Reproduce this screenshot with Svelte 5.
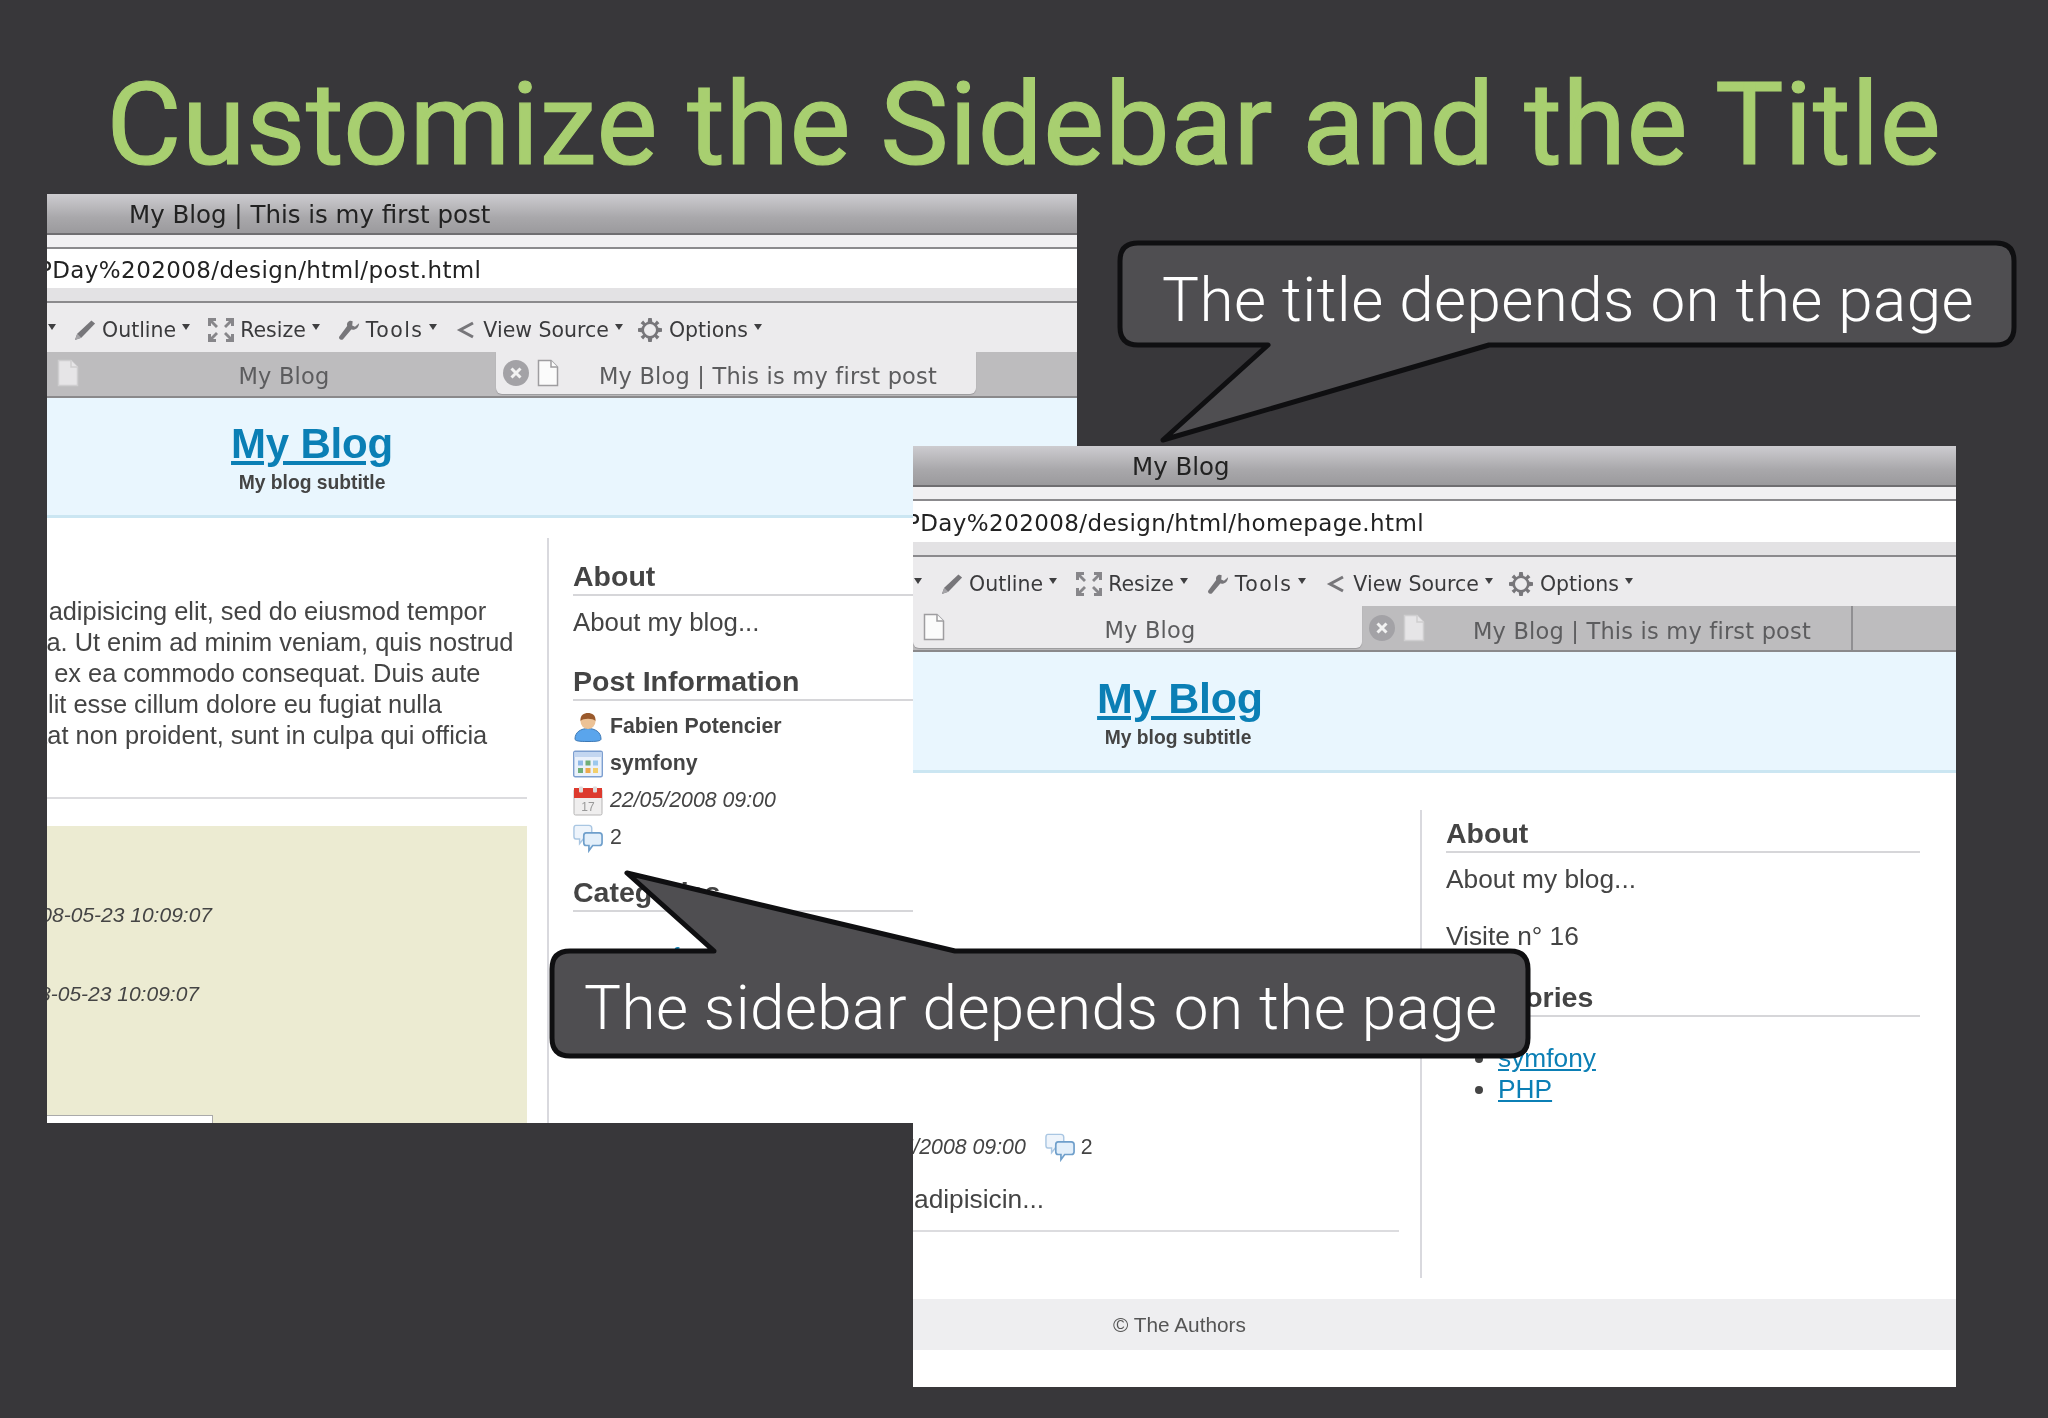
<script lang="ts">
  // Slide with two overlapping browser screenshots and two speech bubbles.
  const tools = [
    { label: "Outline", icon: "pencil" },
    { label: "Resize", icon: "resize" },
    { label: "Tools", icon: "wrench" },
    { label: "View Source", icon: "source" },
    { label: "Options", icon: "gear" },
  ];
  const lorem = [
    "Lorem ipsum dolor sit amet, consectetur adipisicing elit, sed do eiusmod tempor",
    "incididunt ut labore et dolore magna aliqua. Ut enim ad minim veniam, quis nostrud",
    "exercitation ullamco laboris nisi ut aliquip ex ea commodo consequat. Duis aute",
    "irure dolor in reprehenderit in voluptate velit esse cillum dolore eu fugiat nulla",
    "pariatur. Excepteur sint occaecat cupidatat non proident, sunt in culpa qui officia",
  ];
  const firstPost = "My Blog | This is my first post";
</script>

{#snippet doc(cls)}
  <svg class="doc {cls}" viewBox="0 0 22 28">
    <path d="M1.5 1.5H14L20.5 8V26.5H1.5Z" />
    <path d="M14 1.5V8H20.5" />
  </svg>
{/snippet}

{#snippet toolIcon(name)}
  {#if name === "pencil"}
    <svg class="ti" viewBox="0 0 24 24"><path d="M19 1.5L23 5 8 20.5 1 23 3.5 16Z" fill="#77767a" /><path d="M3.5 16L8 20.5 1 23Z" fill="#a5a4a8" /></svg>
  {:else if name === "resize"}
    <svg class="ti wide" viewBox="0 0 26 24">
      <g fill="#87868a">
        <path d="M0 0H8V3H5L10 8 8 10 3 5V8H0Z" />
        <path d="M26 0H18V3H21L16 8 18 10 23 5V8H26Z" />
        <path d="M0 24H8V21H5L10 16 8 14 3 19V16H0Z" />
        <path d="M26 24H18V21H21L16 16 18 14 23 19V16H26Z" />
      </g>
    </svg>
  {:else if name === "wrench"}
    <svg class="ti" viewBox="0 0 24 24"><path d="M23 4.5L18.5 8.5 15.5 7 16 2.5C12.5 0.5 9 3.5 10 7.5L1.5 19C0 21 3.5 24 5.5 22L14.5 11.5C19 12.5 23 9 23 4.5Z" fill="#77767a" /></svg>
  {:else if name === "source"}
    <svg class="ti" viewBox="0 0 20 24"><path d="M17 5L4 12 17 19" fill="none" stroke="#77767a" stroke-width="3" /></svg>
  {:else}
    <svg class="ti wide" viewBox="0 0 28 28">
      <circle cx="14" cy="14" r="8.5" fill="none" stroke="#77767a" stroke-width="3" />
      <path d="M12 0H16L17 6H11ZM12 28H16L17 22H11ZM0 12V16L6 17V11ZM28 12V16L22 17V11ZM3 6L6 3 10 8 8 10ZM25 6L22 3 18 8 20 10ZM3 22L6 25 10 20 8 18ZM25 22L22 25 18 20 20 18Z" fill="#77767a" />
    </svg>
  {/if}
{/snippet}

{#snippet chrome(title, urlText, firstActive)}
  <div class="titlebar"><span class="wintitle">{title}</span></div>
  <div class="band"></div>
  <div class="url"><span>{urlText}</span></div>
  <div class="band low"></div>
  <div class="toolbar">
    <i class="tri first"></i>
    {#each tools as t}
      <div class="tool {t.icon}">
        {@render toolIcon(t.icon)}
        <span>{t.label}</span>
        <i class="tri"></i>
      </div>
    {/each}
  </div>
  <div class="tabs">
    <div class="tab one" class:active={firstActive}>
      {@render doc(firstActive ? "on" : "")}
      <span class="tablabel">My Blog</span>
    </div>
    <div class="tab two" class:active={!firstActive}>
      <svg class="close" viewBox="0 0 26 26">
        <circle cx="13" cy="13" r="13" fill="#a3a2a6" />
        <path d="M8.5 8.5L17.5 17.5M17.5 8.5L8.5 17.5" stroke="#f2f2f2" stroke-width="3" />
      </svg>
      {@render doc(firstActive ? "" : "on")}
      <span class="tablabel">{firstPost}</span>
    </div>
  </div>
  <header class="masthead">
    <div class="blogname"><a href="#top">My Blog</a></div>
    <div class="subtitle">My blog subtitle</div>
  </header>
{/snippet}

{#snippet bubbles()}
  <svg class="ico" viewBox="0 0 32 30">
    <path d="M3 1.5H17Q20 1.5 20 4.5V13Q20 16 17 16H11L7 21V16H3Q1 16 1 13V4.5Q1 1.5 3 1.5Z" fill="#eef4fb" stroke="#a9c6e2" stroke-width="1.5" />
    <path d="M14 9.5H28Q31 9.5 31 12.5V20Q31 23 28 23H21L17 28.5V23H14Q11.5 23 11.5 20V12.5Q11.5 9.5 14 9.5Z" fill="#e3effa" stroke="#6f9fcb" stroke-width="1.8" />
  </svg>
{/snippet}

<div class="slide">
  <h1>Customize the Sidebar and the Title</h1>

  <section class="window w1">
    {@render chrome(firstPost, "PHPDay%202008/design/html/post.html", false)}
    <div class="page">
      <div class="main">
        <div class="lorem">
          {#each lorem as line}<div>{line}</div>{/each}
        </div>
        <hr />
        <div class="comments">
          <div class="when a">2008-05-23 10:09:07</div>
          <div class="when b">2008-05-23 10:09:07</div>
          <div class="field"></div>
        </div>
      </div>
      <aside class="side">
        <h3>About</h3>
        <p class="about">About my blog...</p>
        <h3 class="info">Post Information</h3>
        <ul class="meta">
          <li>
            <svg class="ico" viewBox="0 0 30 30">
              <path d="M2 27C2 20 8 16.5 15 16.5S28 20 28 27C28 29 24 29.5 15 29.5S2 29 2 27Z" fill="#5aa5ec" stroke="#3d78b4" />
              <circle cx="15" cy="9.5" r="7.5" fill="#ecc296" />
              <path d="M7.5 9C7 3 11 1 15 1S23 3 22.5 9C20 6 10 6 7.5 9Z" fill="#9a5a2c" />
            </svg>
            <b>Fabien Potencier</b>
          </li>
          <li>
            <svg class="ico" viewBox="0 0 30 27">
              <rect x="0.7" y="0.7" width="28.6" height="25.6" rx="1.5" fill="#eaf1fb" stroke="#7d9fd0" stroke-width="1.4" />
              <rect x="1.5" y="1.5" width="27" height="5" fill="#c3d6f0" />
              <g>
                <rect x="5" y="10" width="5" height="5" fill="#8fb9e8" /><rect x="12.5" y="10" width="5" height="5" fill="#6fae78" /><rect x="20" y="10" width="5" height="5" fill="#9cc8ec" />
                <rect x="5" y="17.5" width="5" height="5" fill="#6fae78" /><rect x="12.5" y="17.5" width="5" height="5" fill="#eeaa4c" /><rect x="20" y="17.5" width="5" height="5" fill="#f2cf6c" />
              </g>
            </svg>
            <b>symfony</b>
          </li>
          <li>
            <svg class="ico" viewBox="0 0 30 30">
              <rect x="1" y="3" width="28" height="26" rx="1.5" fill="#efeeee" stroke="#b5b4b4" />
              <rect x="1" y="2" width="28" height="10" fill="#dd3a2e" />
              <rect x="6" y="0.5" width="4" height="6" rx="1" fill="#ddd" /><rect x="20" y="0.5" width="4" height="6" rx="1" fill="#ddd" />
              <text x="15" y="25" text-anchor="middle" font-size="12" fill="#999" font-family="Liberation Sans">17</text>
            </svg>
            <em>22/05/2008 09:00</em>
          </li>
          <li>{@render bubbles()}<span>2</span></li>
        </ul>
        <h3 class="cat">Categories</h3>
        <ul class="cats"><li><a href="#top">symfony</a></li></ul>
      </aside>
    </div>
  </section>

  <section class="window w2">
    {@render chrome("My Blog", "PHPDay%202008/design/html/homepage.html", true)}
    <div class="page">
      <div class="main">
        <div class="postmeta">
          <em>22/05/2008 09:00</em>
          {@render bubbles()}
          <span>2</span>
        </div>
        <div class="excerpt">Lorem ipsum dolor sit amet, consectetur adipisicin...</div>
        <hr />
      </div>
      <aside class="side">
        <h3>About</h3>
        <p class="about">About my blog...</p>
        <p class="visits">Visite n° 16</p>
        <h3 class="cat">Categories</h3>
        <ul class="cats">
          <li><a href="#top">symfony</a></li>
          <li><a href="#top">PHP</a></li>
        </ul>
      </aside>
    </div>
    <footer class="foot"><span>© The Authors</span></footer>
  </section>

  <svg class="bubbles" viewBox="0 0 2048 1418">
    <path d="M1138 243H1996Q2014 243 2014 261V327Q2014 345 1996 345H1489L1163 440L1268 345H1138Q1120 345 1120 327V261Q1120 243 1138 243Z" />
    <path d="M570 951H714L627 873L955 951H1510Q1528 951 1528 969V1038Q1528 1056 1510 1056H570Q552 1056 552 1038V969Q552 951 570 951Z" />
  </svg>
  <div class="say top">The title depends on the page</div>
  <div class="say bottom">The sidebar depends on the page</div>
</div>

<style>
  :global(body) {
    margin: 0;
    background: #38373a;
  }
  .slide {
    position: relative;
    width: 2048px;
    height: 1418px;
    overflow: hidden;
    background: #38373a;
    font-family: "Liberation Sans", Arial, sans-serif;
  }
  h1 {
    margin: 0;
    padding-top: 58px;
    text-align: center;
    font: 400 115px/134px Roboto, sans-serif;
    letter-spacing: 0.65px;
    -webkit-text-stroke: 1.2px #a8cf70;
    color: #a8cf70;
  }
  .window {
    position: absolute;
    display: flex;
    flex-direction: column;
    background: #fff;
    overflow: hidden;
    color: #444;
    filter: blur(0.5px);
  }
  .w1 {
    left: 47px;
    top: 194px;
    width: 1030px;
    height: 929px;
  }
  .w2 {
    left: 913px;
    top: 446px;
    width: 1043px;
    height: 941px;
  }

  .titlebar {
    height: 41px;
    flex: none;
    display: flex;
    align-items: center;
    box-sizing: border-box;
    padding-top: 2px;
    border-bottom: 2px solid #6f6e71;
    background: linear-gradient(#cdccd0, #a9a8ab 60%, #9b9a9d);
    font: 24.5px "DejaVu Sans", sans-serif;
    color: #222;
  }
  .w1 .wintitle {
    margin-left: 82px;
  }
  .w2 .wintitle {
    margin-left: 219px;
  }
  .band {
    height: 14px;
    flex: none;
    box-sizing: border-box;
    background: #f1f0f2;
    border-bottom: 2px solid #8b8a8d;
  }
  .band.low {
    height: 15px;
    background: #e3e2e4;
  }
  .url {
    height: 39px;
    flex: none;
    display: flex;
    align-items: center;
    box-sizing: border-box;
    padding-top: 2px;
    background: #fff;
    font: 23px "DejaVu Sans", sans-serif;
    letter-spacing: 0.4px;
    color: #222;
    white-space: nowrap;
  }
  .w2 .url {
    height: 41px;
    padding-top: 3px;
  }
  .url span {
    margin-left: -41px;
  }
  .w2 .url span {
    margin-left: -39px;
  }
  .toolbar {
    height: 49px;
    flex: none;
    display: flex;
    align-items: center;
    gap: 18px;
    box-sizing: border-box;
    padding-top: 4px;
    background: #ecebed;
    font: 20.5px "DejaVu Sans", sans-serif;
    color: #3a3a3c;
  }
  .w2 .toolbar {
    gap: 19px;
  }
  .tool {
    display: flex;
    align-items: center;
    gap: 6px;
  }
  .tool span {
    white-space: nowrap;
  }
  .tool.wrench span {
    letter-spacing: 1.4px;
  }
  .tool.gear {
    margin-left: -4px;
  }
  .ti {
    width: 22px;
    height: 24px;
    flex: none;
  }
  .ti.wide {
    width: 26px;
  }
  .tri {
    width: 0;
    height: 0;
    flex: none;
    border: 4px solid transparent;
    border-top: 6px solid #3f3f41;
    border-bottom: 0;
    margin-bottom: 6px;
  }
  .tri.first {
    margin-left: 1px;
  }
  .tabs {
    height: 46px;
    flex: none;
    display: flex;
    box-sizing: border-box;
    background: #bdbcbe;
    border-bottom: 2px solid #8a898b;
    font: 22.5px "DejaVu Sans", sans-serif;
    letter-spacing: 0.2px;
    color: #5c5c5e;
  }
  .tab {
    flex: none;
    display: flex;
    align-items: center;
    box-sizing: border-box;
    height: 42px;
    padding-top: 5px;
  }
  .tab.one {
    width: 449px;
    padding-left: 10px;
    padding-right: 7px;
  }
  .tab.two {
    width: 480px;
    padding-left: 7px;
    padding-right: 7px;
    gap: 8px;
  }
  .w2 .tab.two {
    width: 491px;
    padding-right: 0;
    border-right: 2px solid #908f92;
    height: 44px;
  }
  .tab.active {
    background: #ecebed;
    border-radius: 0 0 6px 6px;
    box-shadow: 0 1px 1px #9a999c;
  }
  .tablabel {
    flex: 1;
    text-align: center;
    white-space: nowrap;
  }
  .close {
    width: 26px;
    height: 26px;
    flex: none;
    margin-top: -5px;
  }
  .doc {
    width: 22px;
    height: 28px;
    flex: none;
    margin-top: -5px;
    fill: #e6e5e7;
    stroke: #cfced0;
    stroke-width: 1.5;
  }
  .doc.on {
    fill: #fbfbfb;
    stroke: #9e9da0;
  }
  .masthead {
    height: 121px;
    flex: none;
    box-sizing: border-box;
    padding-top: 21px;
    background: #e9f6fe;
    border-bottom: 3px solid #cbe6f2;
    text-align: center;
  }
  .w1 .masthead {
    height: 120px;
  }
  .blogname,
  .subtitle {
    width: 530px;
  }
  .w2 .blogname {
    width: 534px;
    font-size: 43px;
  }
  .blogname {
    font: 700 42px/50px "Liberation Sans", sans-serif;
    letter-spacing: -0.2px;
  }
  .blogname a,
  .cats a {
    color: #0b7fb5;
  }
  .subtitle {
    margin-top: 2px;
    font: 700 19.3px/24px "Liberation Sans", sans-serif;
    color: #444;
  }
  .w2 .subtitle {
    margin-top: 3px;
  }

  .page {
    flex: 1;
    min-height: 0;
    display: grid;
    grid-template-columns: 500px 1fr;
  }
  .w2 .page {
    flex: none;
    height: 526px;
    grid-template-columns: 507px 1fr;
  }
  .main {
    display: flex;
    flex-direction: column;
    min-height: 0;
  }
  .lorem {
    padding-top: 78px;
    margin-left: -457px;
    font-size: 25.4px;
    line-height: 31px;
    white-space: nowrap;
  }
  .lorem div:nth-child(2) {
    margin-left: -8px;
  }
  .lorem div:nth-child(3) {
    margin-left: -3px;
  }
  .lorem div:nth-child(4) {
    margin-left: -12px;
  }
  hr {
    width: 480px;
    height: 2px;
    margin: 46px 0 0;
    border: 0;
    background: #dcdcdf;
  }
  .comments {
    position: relative;
    flex: 1;
    width: 480px;
    margin-top: 27px;
    padding-top: 75px;
    background: #ecebd2;
    overflow: hidden;
    font: italic 21px/28px "Liberation Sans", sans-serif;
    white-space: nowrap;
  }
  .when.a {
    margin-left: -30px;
  }
  .when.b {
    margin-top: 51px;
    margin-left: -43px;
  }
  .field {
    width: 166px;
    height: 20px;
    margin-top: 107px;
    background: #fff;
    border: 1px solid #aaa;
    border-left: 0;
    box-sizing: border-box;
  }
  .side {
    margin-top: 20px;
    padding-left: 24px;
    border-left: 2px solid #d9d9de;
    min-width: 0;
  }
  .w2 .side {
    margin-top: 37px;
    height: 468px;
  }
  h3 {
    margin: 0;
    height: 36px;
    box-sizing: content-box;
    border-bottom: 2px solid #d6d6d9;
    font: 700 28.5px/36px "Liberation Sans", sans-serif;
    color: #444;
    white-space: nowrap;
  }
  .w2 h3 {
    margin-right: 36px;
  }
  .w1 h3:first-child {
    margin-top: 20px;
  }
  .w2 h3:first-child {
    margin-top: 5px;
  }
  .about,
  .visits {
    margin: 11px 0 0;
    font-size: 25.8px;
    line-height: 30px;
  }
  .w2 .about,
  .w2 .visits {
    font-size: 26.3px;
  }
  .w2 .visits {
    margin-top: 27px;
  }
  .info {
    margin-top: 26px;
  }
  .meta {
    margin: 7px 0 0;
    padding: 0;
    list-style: none;
    font-size: 21.3px;
    line-height: 37px;
  }
  .meta li {
    height: 37px;
    display: flex;
    align-items: center;
    gap: 7px;
  }
  .ico {
    width: 30px;
    height: 30px;
    flex: none;
  }
  .cat {
    margin-top: 18px;
  }
  .w2 .cat {
    margin-top: 28px;
  }
  .cats {
    margin: 26px 0 0;
    padding-left: 52px;
    font-size: 26.3px;
    line-height: 31px;
  }
  .w1 .cats {
    margin-top: 30px;
    font-size: 25.8px;
  }
  .postmeta {
    display: flex;
    align-items: center;
    gap: 6px;
    height: 30px;
    margin-top: 359px;
    margin-left: -53px;
    font-size: 21.3px;
    white-space: nowrap;
  }
  .postmeta em {
    margin-right: 13px;
  }
  .excerpt {
    margin-top: 22px;
    margin-left: -474px;
    font-size: 26.3px;
    line-height: 30px;
    white-space: nowrap;
  }
  .w2 hr {
    width: 486px;
    margin-top: 16px;
  }
  .foot {
    height: 51px;
    flex: none;
    display: flex;
    align-items: center;
    background: #eeeef0;
    font-size: 20.8px;
    color: #555;
  }
  .foot span {
    margin-left: 200px;
  }

  .bubbles {
    position: absolute;
    inset: 0;
    width: 2048px;
    height: 1418px;
    fill: #4f4e51;
    stroke: #0f0f11;
    stroke-width: 5;
    stroke-linejoin: round;
    pointer-events: none;
  }
  .say {
    position: absolute;
    font: 300 62px/74px Roboto, sans-serif;
    letter-spacing: 0.4px;
    color: #fff;
    white-space: nowrap;
  }
  .say.top {
    left: 1162px;
    top: 263px;
  }
  .say.bottom {
    left: 584px;
    top: 971px;
  }
</style>
